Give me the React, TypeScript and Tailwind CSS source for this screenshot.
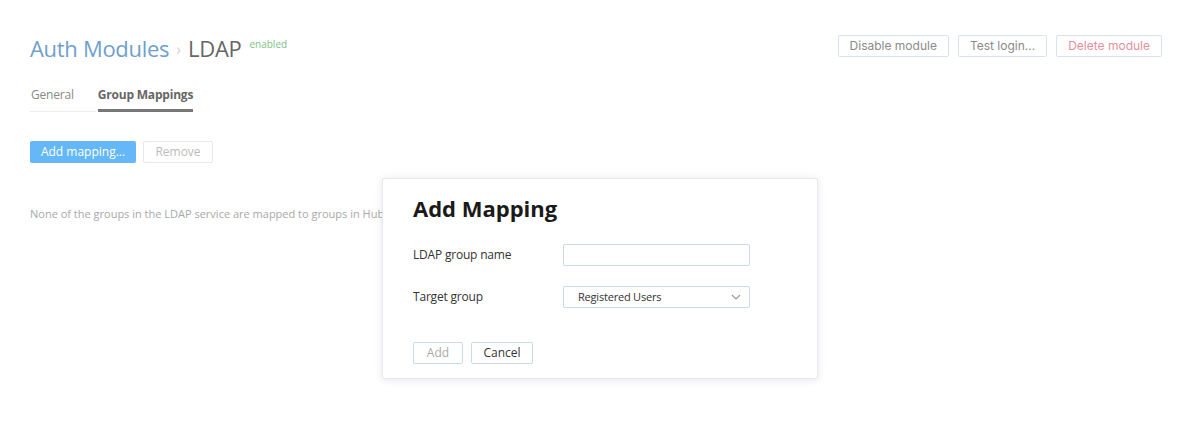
import React from "react";

export default function App() {
  const sans = { fontFamily: '"Open Sans", "Noto Sans", sans-serif' };
  return (
    <div className="relative w-[1200px] h-[432px] bg-white overflow-hidden" style={sans}>
      <div className="pl-[30px] pr-[38px] pt-[33px]">
        <div className="flex items-start justify-between">
          <div className="flex items-start">
            <span className="text-[22px] leading-[30px] text-[#6f9fcf] tracking-[-0.3px]">Auth Modules</span>
            <span className="text-[16px] leading-[30px] text-[#d0d0d0] mx-[7px] mt-[1px]">›</span>
            <span className="text-[22px] leading-[30px] text-[#666666] tracking-[-0.3px]">LDAP</span>
            <span className="text-[10px] leading-[14px] text-[#7cbf86] ml-[8px] mt-[4px]">enabled</span>
          </div>
          <div className="flex gap-[9px] mt-[2px]" style={{ fontFamily: 'Inter, "Noto Sans", sans-serif' }}>
            <button className="h-[22px] px-[11px] border border-[#d6e4f1] rounded-[2px] text-[12px] text-[#8a8a8a]">Disable module</button>
            <button className="h-[22px] px-[11px] border border-[#d6e4f1] rounded-[2px] text-[12px] text-[#8a8a8a]">Test login...</button>
            <button className="h-[22px] px-[11px] border border-[#d6e4f1] rounded-[2px] text-[12px] text-[#e3909e]">Delete module</button>
          </div>
        </div>
        <div className="flex mt-[17px]">
          <div className="border-b border-[#ececec] pb-[6px] pr-[22px] pl-[1px]">
            <span className="text-[12px] leading-[16px] text-[#888888] tracking-[-0.2px]">General</span>
          </div>
          <div className="border-b-[3px] border-[#777777] pb-[4px] ml-[2px]">
            <span className="text-[12px] leading-[16px] font-bold text-[#666666] tracking-[-0.2px]">Group Mappings</span>
          </div>
        </div>
        <div className="flex gap-[7px] mt-[29px]">
          <button className="h-[22px] w-[106px] bg-[#65b8f7] rounded-[2px] text-[12px] text-white">Add mapping...</button>
          <button className="h-[22px] w-[70px] border border-[#e8e8e8] rounded-[2px] text-[12px] text-[#bbbbbb]">Remove</button>
        </div>
        <p className="mt-[44px] text-[11px] leading-[14px] text-[#a8a8a8]">None of the groups in the LDAP service are mapped to groups in Hub</p>
      </div>

      <div className="absolute left-[382px] top-[178px] w-[436px] h-[201px] bg-white border border-[#e3e9ef] rounded-[2px] shadow-[0_1px_8px_rgba(0,0,0,0.10)] pl-[30px] pt-[15px]">
        <h2 className="text-[22px] leading-[28px] font-bold text-[#1a1a1a]">Add Mapping</h2>
        <div className="flex items-center mt-[22px]">
          <span className="w-[150px] text-[12px] text-[#333333] tracking-[-0.2px]">LDAP group name</span>
          <div className="w-[187px] h-[22px] border border-[#c9dbea] rounded-[2px]" />
        </div>
        <div className="flex items-center mt-[20px]">
          <span className="w-[150px] text-[12px] text-[#333333] tracking-[-0.2px]">Target group</span>
          <div className="w-[187px] h-[22px] border border-[#c9dbea] rounded-[2px] flex items-center justify-between pl-[14px] pr-[8px]">
            <span className="text-[11px] text-[#333333] tracking-[-0.2px]">Registered Users</span>
            <svg width="10" height="6" viewBox="0 0 10 6" fill="none">
              <path d="M1 1l4 4 4-4" stroke="#9a9a9a" strokeWidth="1.2" />
            </svg>
          </div>
        </div>
        <div className="flex gap-[8px] mt-[34px]">
          <button className="h-[22px] w-[50px] border border-[#c9dbea] rounded-[2px] text-[12px] text-[#aaaaaa]">Add</button>
          <button className="h-[22px] w-[62px] border border-[#c9dbea] rounded-[2px] text-[12px] text-[#333333]">Cancel</button>
        </div>
      </div>
    </div>
  );
}
